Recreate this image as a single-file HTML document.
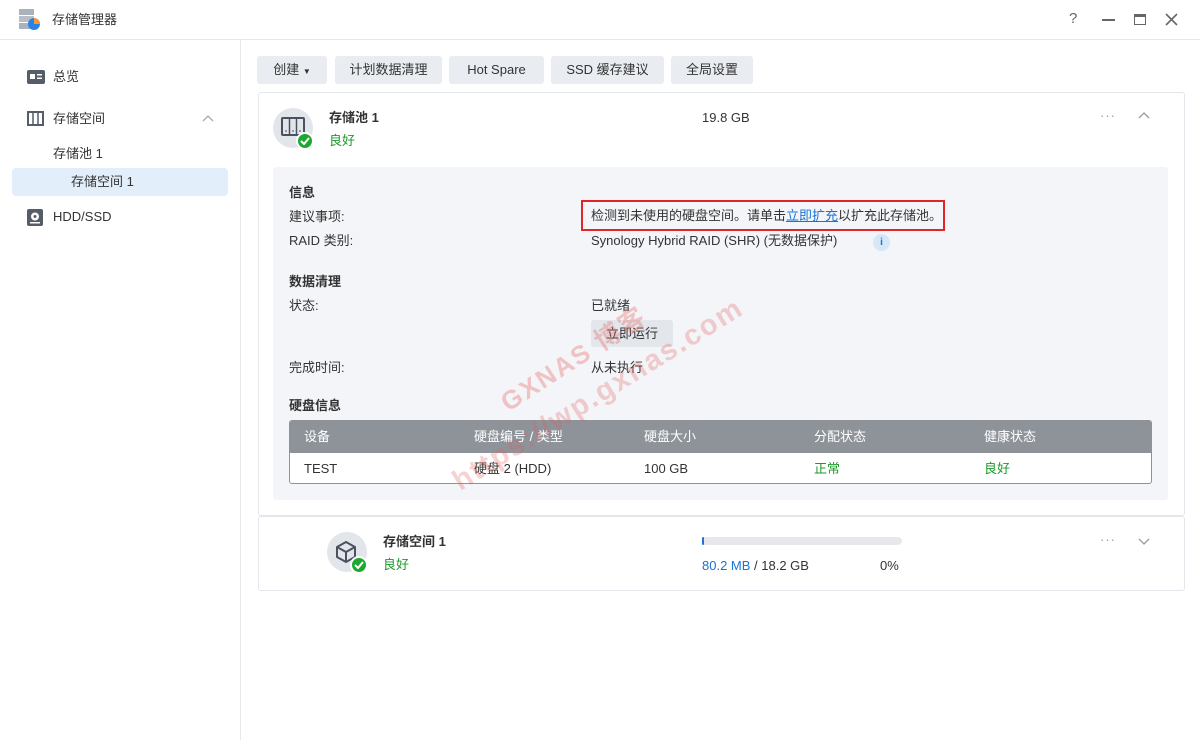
<!DOCTYPE html>
<html><head><meta charset="utf-8"><style>
*{box-sizing:border-box;margin:0;padding:0}
body{width:1200px;height:740px;overflow:hidden;background:#fff;font-family:"Liberation Sans","Noto Sans CJK SC",sans-serif;font-size:13px;line-height:16px;color:#333;position:relative}
.a{position:absolute}
.title{left:0;top:0;width:1200px;height:40px;border-bottom:1px solid #e6e8eb}
.side{left:0;top:40px;width:241px;height:700px;border-right:1px solid #e6e8eb}
.btn{position:absolute;top:56px;height:28px;background:#e9edf2;border-radius:3px;line-height:28px;text-align:center;font-size:13px;color:#333}
.card{border:1px solid #e3e6ea;border-radius:3px;background:#fff}
.lbl{position:absolute;left:289px;font-size:13px;color:#333}
.h{font-weight:bold}
.val{position:absolute;left:591px;font-size:13px;color:#333}
.g{color:#1d9a2b}
</style></head><body>
<div class="a title">
 <svg class="a" style="left:18px;top:9px" width="24" height="22" viewBox="0 0 24 22"><rect x="1" y="0" width="15" height="6" fill="#aab2bd"/><rect x="1" y="7" width="15" height="6" fill="#b7bec8"/><rect x="1" y="14" width="15" height="6" fill="#aab2bd"/><circle cx="16" cy="15" r="6" fill="#2a83e0"/><path d="M16 9a6 6 0 0 1 6 6h-6z" fill="#f39a3b"/></svg>
 <div class="a" style="left:52px;top:12px;font-size:13px;color:#333">存储管理器</div>
 <div class="a" style="left:1069px;top:11px;font-size:15px;color:#666">?</div>
 <div class="a" style="left:1102px;top:19px;width:13px;height:2px;background:#666"></div>
 <div class="a" style="left:1134px;top:14px;width:12px;height:11px;border:1.5px solid #666;border-top:3px solid #666"></div>
 <svg class="a" style="left:1165px;top:13px" width="13" height="13" viewBox="0 0 13 13"><path d="M1 1L12 12M12 1L1 12" stroke="#666" stroke-width="1.6"/></svg>
</div>
<div class="a side">
 <svg class="a" style="left:27px;top:30px" width="18" height="14" viewBox="0 0 18 14"><rect width="18" height="14" rx="2" fill="#555d69"/><rect x="3" y="4" width="5" height="5" fill="#fff"/><rect x="10" y="4" width="5" height="1.5" fill="#fff"/><rect x="10" y="7.5" width="5" height="1.5" fill="#fff"/></svg>
 <div class="a" style="left:53px;top:29px">总览</div>
 <svg class="a" style="left:27px;top:71px" width="17" height="15" viewBox="0 0 17 15"><rect x="1" y="1" width="15" height="13" fill="none" stroke="#555d69" stroke-width="2"/><path d="M6 1v13M11 1v13" stroke="#555d69" stroke-width="1.5"/></svg>
 <div class="a" style="left:53px;top:71px">存储空间</div>
 <svg class="a" style="left:202px;top:75px" width="12" height="7" viewBox="0 0 12 7"><path d="M1 6L6 1L11 6" stroke="#aaa" fill="none" stroke-width="1.3"/></svg>
 <div class="a" style="left:53px;top:106px">存储池 1</div>
 <div class="a" style="left:12px;top:128px;width:216px;height:28px;background:#e3eefb;border-radius:4px"></div>
 <div class="a" style="left:71px;top:134px">存储空间 1</div>
 <svg class="a" style="left:27px;top:169px" width="16" height="17" viewBox="0 0 16 17"><rect width="16" height="17" rx="2" fill="#555d69"/><circle cx="8" cy="7.5" r="4" fill="#fff"/><circle cx="8" cy="7.5" r="1.5" fill="#555d69"/><rect x="3" y="13" width="10" height="1.5" fill="#fff"/></svg>
 <div class="a" style="left:53px;top:169px">HDD/SSD</div>
</div>
<div class="btn" style="left:257px;width:70px">创建 <span style="font-size:8px">▼</span></div>
<div class="btn" style="left:335px;width:107px">计划数据清理</div>
<div class="btn" style="left:449px;width:95px">Hot Spare</div>
<div class="btn" style="left:551px;width:113px">SSD 缓存建议</div>
<div class="btn" style="left:671px;width:82px">全局设置</div>

<div class="a card" style="left:258px;top:92px;width:927px;height:424px"></div>
<div class="a" style="left:273px;top:108px;width:40px;height:40px;border-radius:50%;background:#e2e6eb"></div>
<svg class="a" style="left:281px;top:117px" width="24" height="20" viewBox="0 0 24 20"><rect x="1" y="1" width="22" height="17" rx="1" fill="none" stroke="#4a5260" stroke-width="2"/><path d="M8.5 1v17M15.5 1v17" stroke="#4a5260" stroke-width="1.5"/><path d="M4 14h2M11 14h2M18 14h2" stroke="#4a5260"/></svg>
<div class="a" style="left:296px;top:132px;width:18px;height:18px;border-radius:50%;background:#1ea832;border:2px solid #fff"></div>
<svg class="a" style="left:300px;top:137px" width="10" height="8" viewBox="0 0 10 8"><path d="M1 4l3 3 5-6" stroke="#fff" stroke-width="2" fill="none"/></svg>
<div class="a h" style="left:329px;top:110px">存储池 1</div>
<div class="a g" style="left:329px;top:133px">良好</div>
<div class="a" style="left:702px;top:110px">19.8 GB</div>
<div class="a" style="left:1100px;top:108px;color:#999;letter-spacing:1px">···</div>
<svg class="a" style="left:1138px;top:112px" width="12" height="7" viewBox="0 0 12 7"><path d="M1 6L6 1L11 6" stroke="#999" fill="none" stroke-width="1.3"/></svg>

<div class="a" style="left:273px;top:167px;width:895px;height:333px;background:#f3f5f8;border-radius:3px"></div>
<div class="lbl h" style="top:185px">信息</div>
<div class="lbl" style="top:209px">建议事项:</div>
<div class="lbl" style="top:233px">RAID 类别:</div>
<div class="a" style="left:581px;top:200px;width:364px;height:31px;border:2px solid #e0262b"></div>
<div class="val" style="top:208px">检测到未使用的硬盘空间。请单击<span style="color:#1a73d6;text-decoration:underline">立即扩充</span>以扩充此存储池。</div>
<div class="val" style="top:233px">Synology Hybrid RAID (SHR) (无数据保护)</div>
<div class="a" style="left:873px;top:234px;width:17px;height:17px;border-radius:50%;background:#d6e7f8;color:#1a73d6;font-size:10px;font-weight:bold;text-align:center;line-height:17px">i</div>
<div class="lbl h" style="top:274px">数据清理</div>
<div class="lbl" style="top:298px">状态:</div>
<div class="val" style="top:298px">已就绪</div>
<div class="a" style="left:591px;top:320px;width:82px;height:27px;background:#e3e7ec;border-radius:3px;text-align:center;line-height:27px">立即运行</div>
<div class="lbl" style="top:360px">完成时间:</div>
<div class="val" style="top:360px">从未执行</div>
<div class="lbl h" style="top:398px">硬盘信息</div>
<div class="a" style="left:289px;top:420px;width:863px;height:64px;border:1px solid #8e939a;border-radius:3px;background:#fff;overflow:hidden">
 <div style="height:32px;background:#8e939a;color:#fff;position:relative">
  <span class="a" style="left:14px;top:8px">设备</span><span class="a" style="left:184px;top:8px">硬盘编号 / 类型</span><span class="a" style="left:354px;top:8px">硬盘大小</span><span class="a" style="left:524px;top:8px">分配状态</span><span class="a" style="left:694px;top:8px">健康状态</span>
 </div>
 <span class="a" style="left:14px;top:40px">TEST</span><span class="a" style="left:184px;top:40px">硬盘 2 (HDD)</span><span class="a" style="left:354px;top:40px">100 GB</span><span class="a g" style="left:524px;top:40px">正常</span><span class="a g" style="left:694px;top:40px">良好</span>
</div>

<div class="a card" style="left:258px;top:516px;width:927px;height:75px"></div>
<div class="a" style="left:327px;top:532px;width:40px;height:40px;border-radius:50%;background:#e2e6eb"></div>
<svg class="a" style="left:335px;top:540px" width="22" height="24" viewBox="0 0 22 24"><path d="M11 2L20 7V17L11 22L2 17V7Z M2 7L11 12L20 7 M11 12V22" fill="none" stroke="#4a5260" stroke-width="2" stroke-linejoin="round"/></svg>
<div class="a" style="left:350px;top:556px;width:18px;height:18px;border-radius:50%;background:#1ea832;border:2px solid #fff"></div>
<svg class="a" style="left:354px;top:561px" width="10" height="8" viewBox="0 0 10 8"><path d="M1 4l3 3 5-6" stroke="#fff" stroke-width="2" fill="none"/></svg>
<div class="a h" style="left:383px;top:534px">存储空间 1</div>
<div class="a g" style="left:383px;top:557px">良好</div>
<div class="a" style="left:702px;top:537px;width:200px;height:8px;border-radius:4px;background:#e6e8eb"><div style="width:2px;height:8px;background:#1a73d6;border-radius:2px"></div></div>
<div class="a" style="left:702px;top:558px"><span style="color:#1a73d6">80.2 MB</span> / 18.2 GB</div>
<div class="a" style="left:880px;top:558px">0%</div>
<div class="a" style="left:1100px;top:532px;color:#999;letter-spacing:1px">···</div>
<svg class="a" style="left:1138px;top:538px" width="12" height="7" viewBox="0 0 12 7"><path d="M1 1L6 6L11 1" stroke="#999" fill="none" stroke-width="1.3"/></svg>

<div class="a" style="left:495px;top:392px;font-size:26px;line-height:30px;font-weight:bold;color:rgba(230,90,90,0.33);transform:rotate(-33deg);transform-origin:0 0;white-space:nowrap;letter-spacing:2px">GXNAS 博客</div>
<div class="a" style="left:447px;top:470px;font-size:29px;line-height:32px;font-weight:bold;color:rgba(230,90,90,0.28);transform:rotate(-32deg);transform-origin:0 0;white-space:nowrap;letter-spacing:2px">https://wp.gxnas.com</div>
</body></html>
